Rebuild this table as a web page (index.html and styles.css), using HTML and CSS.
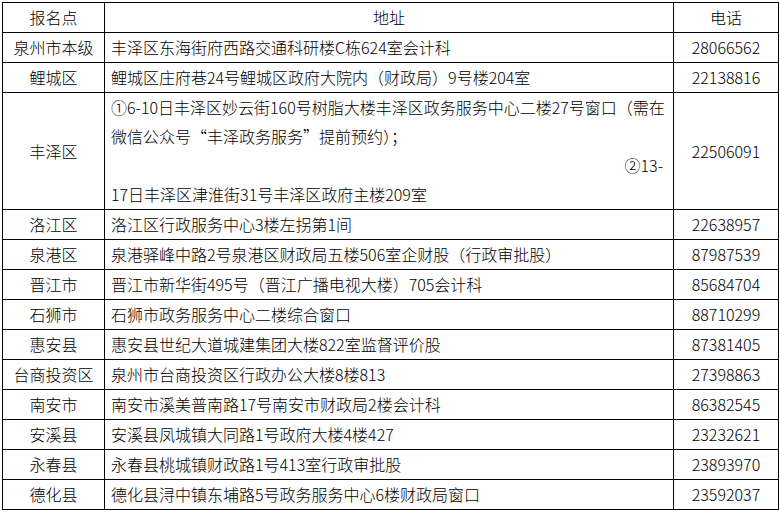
FILE: index.html
```html
<!DOCTYPE html>
<html lang="zh-CN">
<head>
<meta charset="utf-8">
<link rel="stylesheet" href="styles.css">
</head>
<body>
<table class="sites">
  <colgroup>
    <col class="c-name">
    <col class="c-addr">
    <col class="c-tel">
  </colgroup>
  <tr><td class="name">报名点</td><td class="head-addr">地址</td><td class="tel">电话</td></tr>
  <tr><td class="name">泉州市本级</td><td class="addr">丰泽区东海街府西路交通科研楼C栋624室会计科</td><td class="tel">28066562</td></tr>
  <tr><td class="name">鲤城区</td><td class="addr">鲤城区庄府巷24号鲤城区政府大院内（财政局）9号楼204室</td><td class="tel">22138816</td></tr>
  <tr><td class="name">丰泽区</td><td class="addr multi"><div>①6-10日丰泽区妙云街160号树脂大楼丰泽区政务服务中心二楼27号窗口（需在</div><div>微信公众号“丰泽政务服务”提前预约）；</div><div class="right">②13-</div><div>17日丰泽区津淮街31号丰泽区政府主楼209室</div></td><td class="tel">22506091</td></tr>
  <tr><td class="name">洛江区</td><td class="addr">洛江区行政服务中心3楼左拐第1间</td><td class="tel">22638957</td></tr>
  <tr><td class="name">泉港区</td><td class="addr">泉港驿峰中路2号泉港区财政局五楼506室企财股（行政审批股）</td><td class="tel">87987539</td></tr>
  <tr><td class="name">晋江市</td><td class="addr">晋江市新华街495号（晋江广播电视大楼）705会计科</td><td class="tel">85684704</td></tr>
  <tr><td class="name">石狮市</td><td class="addr">石狮市政务服务中心二楼综合窗口</td><td class="tel">88710299</td></tr>
  <tr><td class="name">惠安县</td><td class="addr">惠安县世纪大道城建集团大楼822室监督评价股</td><td class="tel">87381405</td></tr>
  <tr><td class="name">台商投资区</td><td class="addr">泉州市台商投资区行政办公大楼8楼813</td><td class="tel">27398863</td></tr>
  <tr><td class="name">南安市</td><td class="addr">南安市溪美普南路17号南安市财政局2楼会计科</td><td class="tel">86382545</td></tr>
  <tr><td class="name">安溪县</td><td class="addr">安溪县凤城镇大同路1号政府大楼4楼427</td><td class="tel">23232621</td></tr>
  <tr><td class="name">永春县</td><td class="addr">永春县桃城镇财政路1号413室行政审批股</td><td class="tel">23893970</td></tr>
  <tr><td class="name">德化县</td><td class="addr">德化县浔中镇东埔路5号政务服务中心6楼财政局窗口</td><td class="tel">23592037</td></tr>
</table>
</body>
</html>
```

FILE: styles.css
```css
html, body {
  margin: 0;
  padding: 0;
  background: #fff;
}
body {
  font-family: "Noto Sans CJK SC", "Noto Sans", sans-serif;
  font-size: 16px;
  font-weight: 300;
  color: #000;
}
.sites {
  margin: 2px 0 0 2px;
  border-collapse: collapse;
  table-layout: fixed;
  width: 776px;
}
.c-name { width: 102px; }
.c-addr { width: 569px; }
.c-tel { width: 105px; }
.sites td {
  border: 1px solid #000;
  height: 29px;
  line-height: 29px;
  padding: 0 6px;
  vertical-align: middle;
  white-space: nowrap;
  overflow: hidden;
}
.sites td.name,
.sites td.tel,
.sites td.head-addr {
  text-align: center;
  padding: 0;
}
.sites td.addr {
  text-align: left;
}
.right {
  text-align: right;
  padding-right: 4px;
}
```
